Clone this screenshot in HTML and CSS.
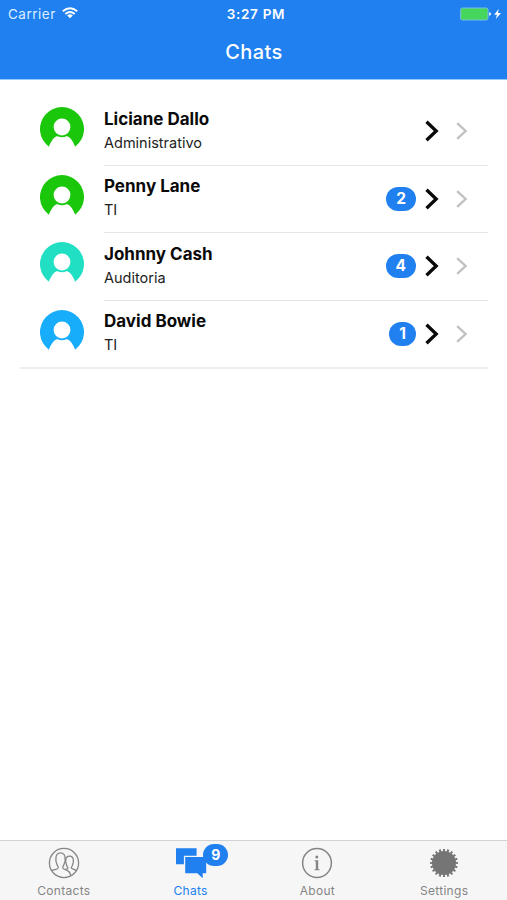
FILE: index.html
```html
<!DOCTYPE html>
<html lang="en">

<head>
	<meta charset="UTF-8">
	<title>Chats</title>
	<link rel="stylesheet" href="styles.css">
</head>

<body>
	<!-- shared icons -->
	<svg class="defs" width="0" height="0">
		<symbol id="avatar" viewBox="0 0 44 44">
			<path fill="currentColor" d="M8.800 39.700A22 22 0 1 1 35.200 39.700C33.700 36 31.800 32.500 29.500 30.600C28.300 29.700 27.400 29.400 26.400 29.300Q22 31.300 17.600 29.300C16.600 29.400 15.700 29.700 14.500 30.600C12.200 32.500 10.300 36 8.800 39.700Z" />
			<circle cx="22" cy="20" r="8.400" fill="#fff" />
		</symbol>
		<symbol id="arrow" viewBox="0 0 14 22">
			<path d="M1.500 1.700L11.200 11L1.500 20.300" fill="none" stroke="currentColor" stroke-width="3.300" />
		</symbol>
		<symbol id="detail" viewBox="0 0 12 18">
			<path d="M1.200 1.200L9.600 9L1.200 16.800" fill="none" stroke="currentColor" stroke-width="2.300" />
		</symbol>
	</svg>

	<div class="app">
		<header class="header">
			<div class="status-bar">
				<div class="carrier">
					<span>Carrier</span>
					<svg width="16" height="12" viewBox="0 0 16 12">
						<g fill="none" stroke="#fff" stroke-width="1.900">
							<path d="M.8 4.300Q8-1.900 15.200 4.300" />
							<path d="M3.300 7Q8 2.900 12.700 7" />
						</g>
						<path fill="#fff" d="M5.200 8.400Q8 6.100 10.800 8.400L8 11.300Z" />
					</svg>
				</div>
				<div class="time">3:27 PM</div>
				<div class="battery">
					<svg width="42" height="14" viewBox="0 0 42 14">
						<rect x=".6" y="1" width="27.400" height="12" rx="1.800" fill="#45d65b" stroke="#79bfe0" stroke-width="1" />
						<path fill="#d5ecfb" d="M29 5.200Q31.200 5.500 31.200 7T29 8.800Z" />
						<path fill="#fff" d="M38.700 2L34.200 7.700H37L35.800 12L41 6.100H37.900Z" />
					</svg>
				</div>
			</div>
			<h1 class="title">Chats</h1>
		</header>

		<main class="content">
			<ul class="chat-list">
				<li class="chat">
					<svg class="avatar green"><use href="#avatar" /></svg>
					<div class="chat-inner">
						<div class="chat-text">
							<h2>Liciane Dallo</h2>
							<p>Administrativo</p>
						</div>
						<svg class="arrow"><use href="#arrow" /></svg>
						<svg class="detail"><use href="#detail" /></svg>
					</div>
				</li>
				<li class="chat">
					<svg class="avatar green"><use href="#avatar" /></svg>
					<div class="chat-inner">
						<div class="chat-text">
							<h2>Penny Lane</h2>
							<p>TI</p>
						</div>
						<span class="badge">2</span>
						<svg class="arrow"><use href="#arrow" /></svg>
						<svg class="detail"><use href="#detail" /></svg>
					</div>
				</li>
				<li class="chat">
					<svg class="avatar teal"><use href="#avatar" /></svg>
					<div class="chat-inner">
						<div class="chat-text">
							<h2>Johnny Cash</h2>
							<p>Auditoria</p>
						</div>
						<span class="badge">4</span>
						<svg class="arrow"><use href="#arrow" /></svg>
						<svg class="detail"><use href="#detail" /></svg>
					</div>
				</li>
				<li class="chat">
					<svg class="avatar blue"><use href="#avatar" /></svg>
					<div class="chat-inner">
						<div class="chat-text">
							<h2>David Bowie</h2>
							<p>TI</p>
						</div>
						<span class="badge">1</span>
						<svg class="arrow"><use href="#arrow" /></svg>
						<svg class="detail"><use href="#detail" /></svg>
					</div>
				</li>
			</ul>
		</main>

		<nav class="tabs">
			<a class="tab">
				<svg class="tab-icon" viewBox="0 0 32 32" fill="none" stroke="currentColor" stroke-width="1.300">
					<circle cx="16" cy="16" r="14.600" />
					<path d="M3.800 23.800C5.500 22.400 9.600 22.800 10.200 20.900C10.500 19.500 9 18.300 8.700 16.300C7.700 15.300 8 13.700 7.900 12C7.700 8 9.700 5.900 12.500 5.900S17.300 8 17.100 12C17 13.700 17.300 15.300 16.300 16.300C16 18.300 14.500 19.500 14.800 20.900C15.600 23.400 22.400 22 22.600 28.700" />
					<path d="M17.800 22.300C19.400 22 20.100 21.600 19.700 20.400C18.700 19.300 18.500 18.300 18.400 17.300C17.500 16.300 17.800 15 17.800 13.300C17.800 10.600 19.200 9.100 21.500 9.100S25.300 10.600 25.300 13.300C25.300 15 25.600 16.300 24.700 17.300C24.600 18.300 24.300 19.300 23.300 20.400C23 22.300 26.500 21.700 28.300 23.800" />
				</svg>
				<span>Contacts</span>
			</a>
			<a class="tab active">
				<svg class="tab-icon" viewBox="0 0 32 32" fill="currentColor">
					<path d="M1 1.200H21.600V8.800H8.900V17.200H1Z" />
					<path d="M10.200 10.100H31.200V26.300H27.700V31.300L22.300 26.300H10.200Z" />
				</svg>
				<span class="tab-badge">9</span>
				<span>Chats</span>
			</a>
			<a class="tab">
				<svg class="tab-icon" viewBox="0 0 32 32">
					<circle cx="16" cy="16" r="14.400" fill="none" stroke="currentColor" stroke-width="1.500" />
					<circle cx="15.800" cy="10" r="1.500" fill="currentColor" />
					<path fill="currentColor" d="M13.500 13.300H17.200V21.900L18.500 22.400V23.200H13.500V22.400L14.800 21.900V14.500L13.500 14.100Z" />
				</svg>
				<span>About</span>
			</a>
			<a class="tab">
				<svg class="tab-icon gear" viewBox="0 0 32 32">
					<circle cx="16" cy="16" r="12" fill="currentColor" />
					<circle cx="16" cy="16" r="12.700" fill="none" stroke="currentColor" stroke-width="2.600" pathLength="80" stroke-dasharray="2 2" stroke-dashoffset="1" />
				</svg>
				<span>Settings</span>
			</a>
		</nav>
	</div>
</body>

</html>
```

FILE: styles.css
```css
html,
body {
	width: 100%;
	height: 100%;
	margin: 0;
	padding: 0;
	overflow: hidden;
}

body {
	font-family: Inter, "Liberation Sans", sans-serif;
	background: #fff;
	color: #0a0a0a;
}

.defs {
	position: absolute;
}

.app {
	display: flex;
	flex-direction: column;
	height: 100vh;
}

/* header */
.header {
	height: 80px;
	box-sizing: border-box;
	background: #2080f0;
	border-bottom: 1px solid #93c8f7;
	color: #fff;
}

.status-bar {
	display: grid;
	grid-template-columns: 1fr auto 1fr;
	align-items: center;
	height: 28px;
	padding: 0 5px 0 8px;
	font-size: 13.5px;
	line-height: 18px;
}

.carrier {
	display: flex;
	align-items: center;
	gap: 6px;
	color: #dcefff;
	letter-spacing: .5px;
}

.carrier svg {
	margin-top: -3px;
}

.time {
	padding-left: 2px;
	font-weight: 600;
	font-size: 13.5px;
	letter-spacing: .7px;
}

.battery {
	display: flex;
	justify-content: flex-end;
}

.title {
	margin: 10px 0 0;
	padding-left: 1px;
	text-align: center;
	font-size: 20px;
	line-height: 28px;
	font-weight: 500;
	letter-spacing: .4px;
}

/* chat list */
.content {
	flex: 1;
	padding: 18px 19px 0 20px;
}

.chat-list {
	list-style: none;
	margin: 0;
	padding: 0;
	border-bottom: 2px solid #efeff0;
}

.chat {
	display: flex;
	height: 67.500px;
	padding-left: 20px;
}

.chat:last-child {
	height: 66px;
}

.avatar {
	width: 44px;
	height: 44px;
	margin: 9px 20px 0 0;
}

.green {
	color: #1bc70b;
}

.teal {
	color: #20dfc3;
}

.blue {
	color: #18adfb;
}

.chat-inner {
	flex: 1;
	display: flex;
	align-items: center;
	box-sizing: border-box;
	padding-right: 20px;
	border-bottom: 1px solid #e5e5e6;
}

.chat:last-child .chat-inner {
	border-bottom: none;
}

.chat-text {
	flex: 1;
	padding-bottom: 2px;
}

.chat-text h2 {
	margin: 0 0 3px;
	font-size: 17px;
	line-height: 22px;
	font-weight: 700;
}

.chat-text p {
	margin: 0;
	font-size: 14.500px;
	line-height: 20px;
	color: #222;
}

.badge {
	padding: 0 10px;
	margin-right: 9px;
	border-radius: 12px;
	background: #2080f0;
	color: #fff;
	font-size: 15.500px;
	line-height: 24px;
	font-weight: 700;
}

.arrow {
	width: 14px;
	height: 22px;
	margin-right: 17px;
	color: #0a0a0a;
}

.detail {
	width: 12px;
	height: 18px;
	color: #c0c0c2;
}

/* bottom tabs */
.tabs {
	display: flex;
	height: 60px;
	box-sizing: border-box;
	border-top: 1px solid #d2d2d4;
	background: #f6f6f7;
}

.tab {
	position: relative;
	flex: 1;
	display: flex;
	flex-direction: column;
	align-items: center;
	padding-top: 6px;
	padding-left: 1px;
	color: #858585;
	font-size: 12px;
	line-height: 16px;
	letter-spacing: .3px;
}

.tab-icon {
	width: 32px;
	height: 32px;
	margin-bottom: 4px;
}

.gear {
	color: #757575;
}

.tab.active {
	color: #2080f0;
}

.tab-badge {
	position: absolute;
	top: 3px;
	left: calc(50% + 13px);
	padding: 0 8px;
	border-radius: 11px;
	background: #2080f0;
	color: #fff;
	font-size: 14px;
	line-height: 22px;
	font-weight: 700;
	letter-spacing: 0;
}
```
